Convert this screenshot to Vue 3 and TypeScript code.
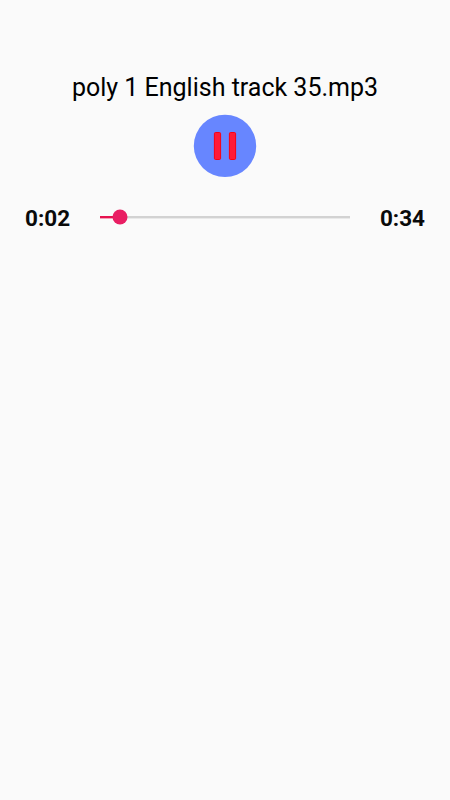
<script setup lang="ts">
import { computed, ref } from 'vue'

const title = 'poly 1 English track 35.mp3'
const elapsed = ref(2)
const duration = 34
const progress = ref(7.9)
const playing = ref(true)

const format = (s: number): string => `${Math.floor(s / 60)}:${String(s % 60).padStart(2, '0')}`
const position = computed(() => `${progress.value}%`)
</script>

<template>
  <main class="player">
    <h1 class="title">{{ title }}</h1>
    <button class="toggle" :aria-pressed="playing" @click="playing = !playing">
      <svg viewBox="0 0 64 64" width="64" height="64">
        <circle cx="32" cy="31.9" r="31.2" fill="#6786ff" />
        <g v-if="playing" fill="#ff1a38" stroke="#fa0012" stroke-width="1">
          <rect x="21.4" y="18.5" width="6.2" height="27" rx="1.2" />
          <rect x="36.4" y="18.5" width="6.2" height="27" rx="1.2" />
        </g>
        <path v-else d="M24 18 L46 32 L24 46 Z" fill="#ff1a38" />
      </svg>
    </button>
    <div class="timeline">
      <span class="time">{{ format(elapsed) }}</span>
      <div class="track">
        <div class="fill" :style="{ width: position }"></div>
        <div class="thumb" :style="{ left: position }"></div>
      </div>
      <span class="time end">{{ format(duration) }}</span>
    </div>
  </main>
</template>

<style>
body {
  background: #fafafa;
}
</style>

<style scoped>
.player {
  box-sizing: border-box;
  min-height: 800px;
  padding-top: 72px;
  display: flex;
  flex-direction: column;
  align-items: center;
  background: #fafafa;
  color: #000;
  font-family: Roboto, sans-serif;
}
.title {
  margin: 0;
  font-size: 25px;
  line-height: 31px;
  font-weight: 400;
  white-space: nowrap;
}
.toggle {
  margin: 11px 0 0;
  padding: 0;
  border: 0;
  background: none;
  width: 64px;
  height: 64px;
}
.toggle svg {
  display: block;
}
.timeline {
  box-sizing: border-box;
  width: 100%;
  margin-top: 24px;
  padding: 0 25px;
  height: 30px;
  display: flex;
  align-items: center;
  justify-content: space-between;
}
.time {
  width: 50px;
  padding-top: 1px;
  font-size: 22.5px;
  line-height: 28px;
  font-weight: 700;
  color: #0a0a0a;
}
.end {
  text-align: right;
}
.track {
  position: relative;
  width: 250px;
  height: 2px;
  background: #d2d2d2;
  box-shadow: 0 1px #e9e9e9;
}
.fill {
  height: 2px;
  background: #e6124f;
  box-shadow: 0 1px #f4a0b8;
}
.thumb {
  position: absolute;
  top: 50%;
  width: 15px;
  height: 15px;
  border-radius: 50%;
  background: #e91e63;
  transform: translate(-50%, -50%);
}
</style>
